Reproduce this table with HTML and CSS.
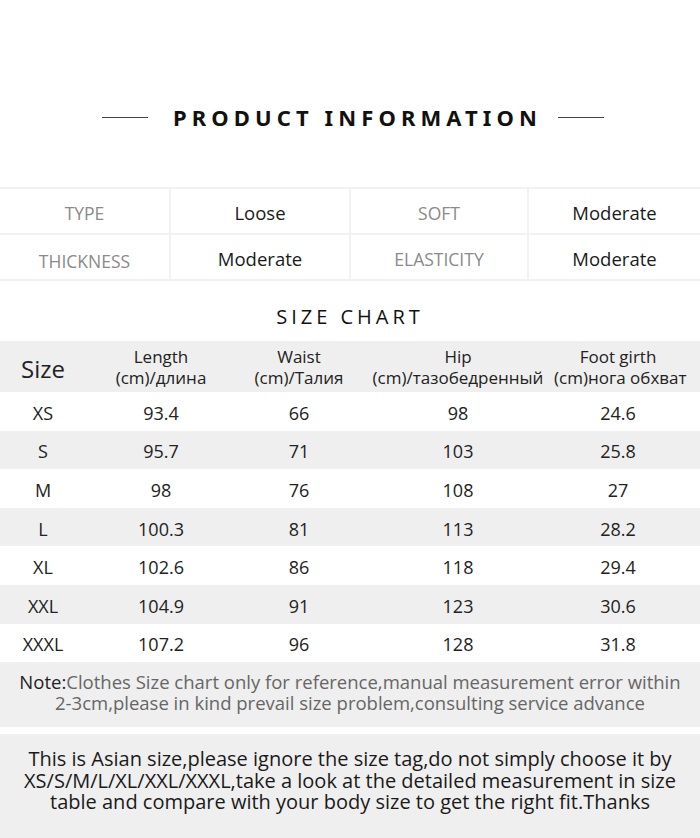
FILE: index.html
```html
<!DOCTYPE html>
<html>
<head>
<meta charset="utf-8">
<link rel="stylesheet" href="styles.css">
</head>
<body>
<div class="page">
  <div class="title-row">
    <span class="rule left"></span>
    <h1 class="title">PRODUCT INFORMATION</h1>
    <span class="rule right"></span>
  </div>

  <div class="info">
    <div class="cell label">TYPE</div>
    <div class="cell value">Loose</div>
    <div class="cell label">SOFT</div>
    <div class="cell value">Moderate</div>
    <div class="cell label low">THICKNESS</div>
    <div class="cell value">Moderate</div>
    <div class="cell label">ELASTICITY</div>
    <div class="cell value">Moderate</div>
  </div>

  <h2 class="subtitle">SIZE CHART</h2>

  <div class="chart">
    <div class="row head">
      <div class="c size">Size</div>
      <div class="c"><span class="ln">Length</span><span class="ln">(cm)/длина</span></div>
      <div class="c"><span class="ln">Waist</span><span class="ln">(cm)/Талия</span></div>
      <div class="c"><span class="ln">Hip</span><span class="ln">(cm)/тазобедренный</span></div>
      <div class="c"><span class="ln">Foot girth</span><span class="ln">(cm)нога обхват</span></div>
    </div>
    <div class="row"><div class="c">XS</div><div class="c">93.4</div><div class="c">66</div><div class="c">98</div><div class="c">24.6</div></div>
    <div class="row alt"><div class="c">S</div><div class="c">95.7</div><div class="c">71</div><div class="c">103</div><div class="c">25.8</div></div>
    <div class="row"><div class="c">M</div><div class="c">98</div><div class="c">76</div><div class="c">108</div><div class="c">27</div></div>
    <div class="row alt"><div class="c">L</div><div class="c">100.3</div><div class="c">81</div><div class="c">113</div><div class="c">28.2</div></div>
    <div class="row"><div class="c">XL</div><div class="c">102.6</div><div class="c">86</div><div class="c">118</div><div class="c">29.4</div></div>
    <div class="row alt"><div class="c">XXL</div><div class="c">104.9</div><div class="c">91</div><div class="c">123</div><div class="c">30.6</div></div>
    <div class="row"><div class="c">XXXL</div><div class="c">107.2</div><div class="c">96</div><div class="c">128</div><div class="c">31.8</div></div>
  </div>

  <div class="note">
    <span class="ln"><span class="note-key">Note:</span>Clothes Size chart only for reference,manual measurement error within</span>
    <span class="ln">2-3cm,please in kind prevail size problem,consulting service advance</span>
  </div>

  <div class="asian">
    <span class="ln">This is Asian size,please ignore the size tag,do not simply choose it by</span>
    <span class="ln">XS/S/M/L/XL/XXL/XXXL,take a look at the detailed measurement in size</span>
    <span class="ln">table and compare with your body size to get the right fit.Thanks</span>
  </div>
</div>
</body>
</html>
```

FILE: styles.css
```css
html, body {
  margin: 0;
  padding: 0;
  background: #fff;
}
.page {
  width: 700px;
  height: 838px;
  overflow: hidden;
  font-family: "Open Sans", "Noto Sans", sans-serif;
  color: #222;
}
.title-row {
  display: flex;
  align-items: center;
  justify-content: center;
  padding-top: 102px;
  padding-left: 6px;
  height: 30px;
}
.rule {
  width: 46px;
  height: 1px;
  background: #444;
}
.rule.left {
  margin-right: 25px;
}
.rule.right {
  margin-left: 16px;
}
.title {
  margin: 0;
  font-family: "Noto Sans", "Open Sans", sans-serif;
  font-weight: 700;
  font-size: 22px;
  letter-spacing: 5.1px;
  line-height: 30px;
  color: #111;
}
.info {
  margin-top: 55px;
  display: grid;
  grid-template-columns: 171px 180px 178px 171px;
  border-top: 2px solid #f2f2f2;
}
.cell {
  height: 41px;
  padding-top: 3px;
  display: flex;
  align-items: center;
  justify-content: center;
  border-bottom: 2px solid #f2f2f2;
  border-right: 2px solid #f2f2f2;
  box-sizing: content-box;
}
.cell:nth-child(4n) {
  border-right: none;
}
.label {
  color: #8a8a8a;
  font-size: 17.5px;
}
.label.low {
  padding-top: 8px;
  height: 36px;
}
.value {
  color: #1a1a1a;
  font-size: 18.5px;
}
.subtitle {
  margin: 0;
  margin-top: 22px;
  text-align: center;
  font-weight: 400;
  font-size: 20px;
  letter-spacing: 4px;
  line-height: 28px;
  color: #111;
}
.chart {
  margin-top: 10px;
}
.row {
  display: grid;
  grid-template-columns: 86px 150px 126px 192px 128px;
  height: 38.6px;
  box-sizing: border-box;
  padding-top: 3px;
  align-items: center;
  font-size: 18px;
  color: #222;
}
.row.alt {
  background: #efefef;
}
.row.head {
  background: #efefef;
  height: 51px;
  padding-top: 1px;
  font-size: 17px;
  line-height: 21px;
}
.c {
  text-align: center;
  white-space: nowrap;
}
.ln {
  display: block;
}
.c.size {
  font-size: 24px;
  padding-top: 2px;
}
.note {
  background: #efefef;
  height: 65px;
  box-sizing: border-box;
  padding: 9px 0 0;
  text-align: center;
  font-size: 18.5px;
  line-height: 21px;
  color: #666;
  white-space: nowrap;
}
.note-key {
  color: #222;
}
.asian {
  margin-top: 7px;
  background: #efefef;
  height: 110px;
  box-sizing: border-box;
  padding: 14px 0 0;
  text-align: center;
  font-size: 20px;
  line-height: 21.5px;
  color: #1a1a1a;
  white-space: nowrap;
}
```
